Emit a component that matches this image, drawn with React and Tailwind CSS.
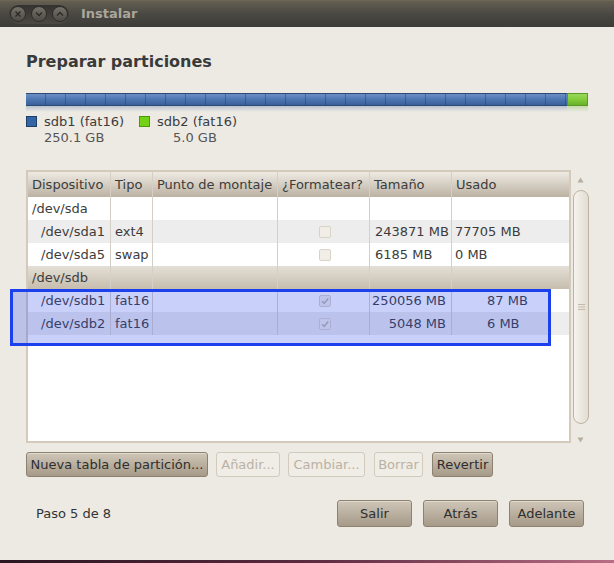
import React from 'react';

const cols = 'grid grid-cols-[83px_42px_125px_92px_82px_117px]';

const rows = [
  { dev: '/dev/sda', indent: false, type: '', check: null, size: '', used: '', bg: 'bg-white' },
  { dev: '/dev/sda1', indent: true, type: 'ext4', check: false, size: '243871 MB', used: '77705 MB', bg: 'bg-[#ededed]' },
  { dev: '/dev/sda5', indent: true, type: 'swap', check: false, size: '6185 MB', used: '0 MB', bg: 'bg-white' },
  { dev: '/dev/sdb', indent: false, type: '', check: null, size: '', used: '', bg: 'bg-gradient-to-b from-[#e4dfd6] to-[#c6bdae]' },
  { dev: '/dev/sdb1', indent: true, type: 'fat16', check: true, size: '250056 MB', used: '87 MB', bg: 'bg-white', right: true },
  { dev: '/dev/sdb2', indent: true, type: 'fat16', check: true, size: '5048 MB', used: '6 MB', bg: 'bg-[#ededed]', right: true },
];

const headers = ['Dispositivo', 'Tipo', 'Punto de montaje', '¿Formatear?', 'Tamaño', 'Usado'];

const Checkbox = ({ checked }) => (
  <div className="w-[12px] h-[12px] rounded-[2px] border border-[#d8d2c7] bg-[#f1eee8] flex items-center justify-center">
    {checked && (
      <svg width="10" height="10" viewBox="0 0 10 10">
        <path d="M2 5.2 L4.2 7.4 L8.2 2.4" fill="none" stroke="#b9b5ad" strokeWidth="1.6" />
      </svg>
    )}
  </div>
);

const Button = ({ children, className = '', disabled }) => (
  <div
    className={`flex items-center justify-center whitespace-nowrap rounded-[3px] border text-[13px] ${
      disabled
        ? 'border-[#d2cabd] bg-[#f0ece6] text-[#bab2a5]'
        : 'border-[#8d8170] bg-gradient-to-b from-[#cfc6b8] to-[#a69a88] text-[#2e2e2e] shadow-[inset_0_1px_0_rgba(255,255,255,0.35)]'
    } ${className}`}
  >
    {children}
  </div>
);

const WinButton = ({ children }) => (
  <div className="w-[16px] h-[16px] rounded-full border border-[#2f2e2a] bg-gradient-to-b from-[#75726a] to-[#4d4b45] flex items-center justify-center">
    {children}
  </div>
);

export default function App() {
  return (
    <div className="relative w-[614px] h-[563px] flex flex-col bg-[#edeae4] overflow-hidden text-[#3c3c3c]" style={{ fontFamily: '"DejaVu Sans", "Liberation Sans", sans-serif' }}>
      {/* title bar */}
      <div className="h-[27px] flex items-center bg-gradient-to-b from-[#645f52] via-[#4a4843] to-[#3c3b37] border-t border-[#6e6553]">
        <div className="ml-[9px] h-[19px] w-[60px] rounded-full bg-gradient-to-b from-[#34332f] to-[#4a4843] flex items-center justify-between px-[1px]">
          <WinButton>
            <svg width="8" height="8" viewBox="0 0 8 8"><path d="M1.5 1.5 L6.5 6.5 M6.5 1.5 L1.5 6.5" stroke="#2a2926" strokeWidth="1.3" /></svg>
          </WinButton>
          <WinButton>
            <svg width="8" height="8" viewBox="0 0 8 8"><path d="M1 2.5 L4 5.5 L7 2.5" fill="none" stroke="#2a2926" strokeWidth="1.3" /></svg>
          </WinButton>
          <WinButton>
            <svg width="8" height="8" viewBox="0 0 8 8"><path d="M1 5.5 L4 2.5 L7 5.5" fill="none" stroke="#2a2926" strokeWidth="1.3" /></svg>
          </WinButton>
        </div>
        <span className="ml-[12px] text-[13px] font-bold text-[#aaa69c]">Instalar</span>
      </div>

      <div className="px-[26px] flex flex-col">
        <h1 className="mt-[25px] h-[19px] leading-[19px] text-[16px] font-bold text-[#3a3a3a]">Preparar particiones</h1>

        {/* partition bar */}
        <div className="mt-[22px] flex h-[13px]">
          <div className="w-[541px] h-full border-y border-[#2c4a78] bg-gradient-to-b from-[#6b8fc4] via-[#4c76b2] to-[#3a6099]">
            <div className="h-full w-full bg-[repeating-linear-gradient(to_right,transparent_0px,transparent_19px,rgba(35,60,105,0.45)_19px,rgba(35,60,105,0.45)_20px)]" />
          </div>
          <div className="w-[21px] h-full border border-[#5b9a22] bg-gradient-to-b from-[#9ad95a] via-[#82cc3a] to-[#68b02a]" />
        </div>
        <div className="flex h-[6px] opacity-40">
          <div className="w-[541px] bg-gradient-to-b from-[#6d87ad] to-transparent" />
          <div className="w-[21px] bg-gradient-to-b from-[#8cc25a] to-transparent" />
        </div>

        {/* legend */}
        <div className="mt-[1px] flex text-[13px]">
          <div className="w-[113px] flex flex-col">
            <div className="h-[17px] flex items-center">
              <div className="w-[11px] h-[11px] border border-[#1f3d68] bg-[#3465a4]" />
              <span className="ml-[7px]">sdb1 (fat16)</span>
            </div>
            <div className="h-[16px] leading-[16px] pl-[18px] text-[#555]">250.1 GB</div>
          </div>
          <div className="flex flex-col">
            <div className="h-[17px] flex items-center">
              <div className="w-[11px] h-[11px] border border-[#4e9a06] bg-[#73d216]" />
              <span className="ml-[7px]">sdb2 (fat16)</span>
            </div>
            <div className="h-[16px] leading-[16px] pl-[34px] text-[#555]">5.0 GB</div>
          </div>
        </div>

        {/* table + scrollbar */}
        <div className="mt-[24px] flex h-[273px]">
          <div className="w-[545px] h-full border-2 border-[#d3cabc] bg-white flex flex-col text-[13px]">
            <div className={`${cols} h-[25px] bg-gradient-to-b from-[#eeeae3] to-[#bcb2a3]`}>
              {headers.map((h, i) => (
                <div key={h} className={`flex items-center pl-[4px] whitespace-nowrap overflow-hidden ${i < 5 ? 'border-r border-[#d6cec2]' : ''}`}>
                  {h}
                </div>
              ))}
            </div>
            {rows.map((r) => (
              <div key={r.dev} className={`${cols} h-[23px] ${r.bg}`}>
                <div className={`flex items-center border-r border-[#d4d0c8] whitespace-nowrap ${r.indent ? 'pl-[13px]' : 'pl-[4px]'}`}>{r.dev}</div>
                <div className="flex items-center border-r border-[#d4d0c8] pl-[4px]">{r.type}</div>
                <div className="border-r border-[#d4d0c8]" />
                <div className="flex items-center justify-center border-r border-[#d4d0c8] pl-[2px]">
                  {r.check !== null && <Checkbox checked={r.check} />}
                </div>
                <div className={`flex items-center border-r border-[#d4d0c8] whitespace-nowrap ${r.right ? 'justify-end pr-[5px]' : 'pl-[5px]'}`}>{r.size}</div>
                <div className={`flex items-center whitespace-nowrap ${r.right ? 'pl-[35px]' : 'pl-[3px]'}`}>{r.used}</div>
              </div>
            ))}
            <div className="flex-1 bg-white" />
          </div>

          {/* scrollbar */}
          <div className="w-[18px] h-full flex flex-col items-center">
            <div className="mt-[7px] h-[12px] flex items-start justify-center">
              <svg width="7" height="6" viewBox="0 0 7 6"><path d="M3.5 0.5 L6.5 5.5 L0.5 5.5 Z" fill="#b8ae9e" /></svg>
            </div>
            <div className="mt-[1px] ml-[2px] w-[16px] h-[234px] rounded-full border border-[#bdb3a3] bg-gradient-to-r from-[#f6f3ee] to-[#e3ddd2] flex items-center justify-center">
              <svg width="7" height="6" viewBox="0 0 7 6"><path d="M0 0.5 H7 M0 3 H7 M0 5.5 H7" stroke="#c3baac" strokeWidth="1" /></svg>
            </div>
            <div className="mt-[13px]">
              <svg width="7" height="6" viewBox="0 0 7 6"><path d="M0.5 0.5 L6.5 0.5 L3.5 5.5 Z" fill="#b8ae9e" /></svg>
            </div>
          </div>
        </div>

        {/* partition actions */}
        <div className="mt-[9px] flex h-[25px]">
          <Button className="w-[182px]">Nueva tabla de partición...</Button>
          <Button disabled className="ml-[8px] w-[64px]">Añadir...</Button>
          <Button disabled className="ml-[8px] w-[77px]">Cambiar...</Button>
          <Button disabled className="ml-[9px] w-[49px]">Borrar</Button>
          <Button className="ml-[9px] w-[61px]">Revertir</Button>
        </div>

        {/* navigation */}
        <div className="mt-[23px] flex items-center h-[27px]">
          <span className="pl-[10px] text-[13px] text-[#333]">Paso 5 de 8</span>
          <div className="ml-auto mr-[4px] flex gap-[11px]">
            <Button className="w-[75px] h-[27px]">Salir</Button>
            <Button className="w-[75px] h-[27px]">Atrás</Button>
            <Button className="w-[75px] h-[27px]">Adelante</Button>
          </div>
        </div>
      </div>

      <div className="mt-auto h-[3px] bg-gradient-to-r from-[#2a1522] via-[#5a2a40] to-[#b86e84]" />

      {/* selection annotation */}
      <div className="absolute left-[10px] top-[289px] w-[541px] h-[57px] border-[3px] border-[#1d40ef] bg-[rgba(40,70,240,0.25)]" />
    </div>
  );
}
